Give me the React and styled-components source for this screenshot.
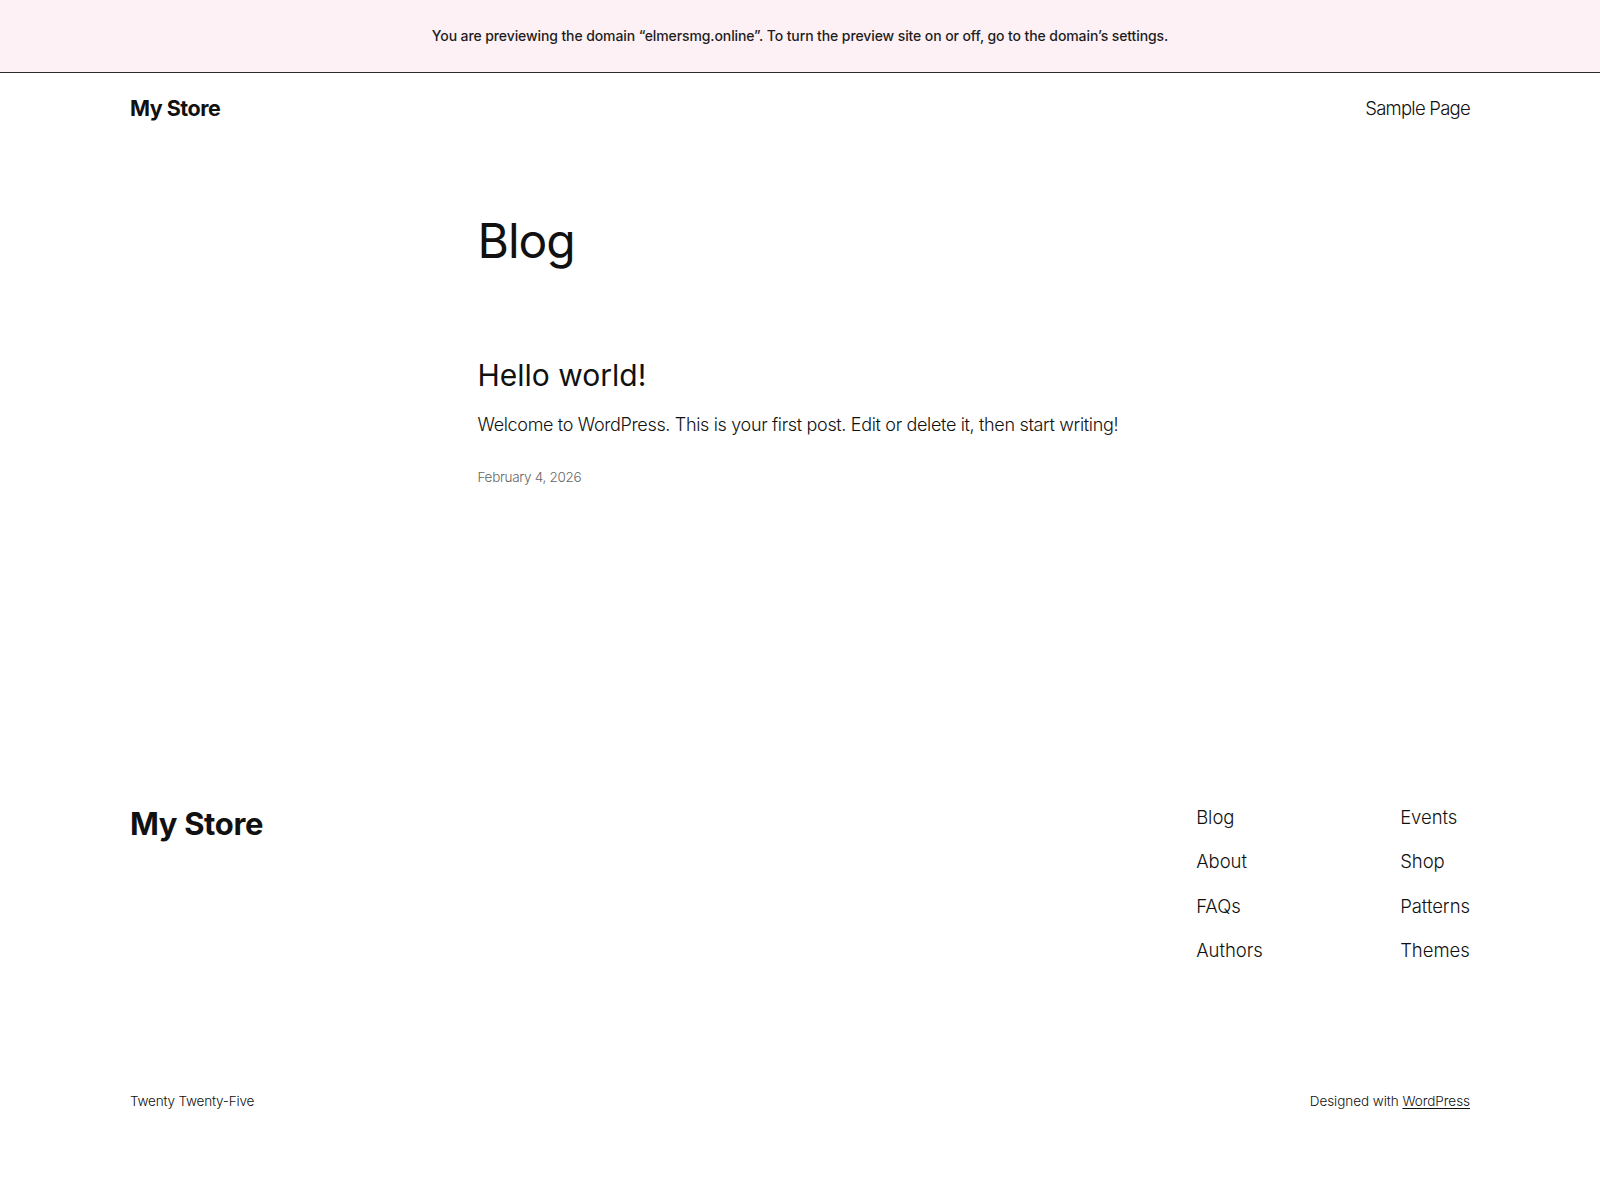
import React from "react";
import styled, { createGlobalStyle } from "styled-components";

const Global = createGlobalStyle`
  * { box-sizing: border-box; }
  body {
    margin: 0;
    background: #ffffff;
    color: #111111;
    font-family: Inter, "Noto Sans", sans-serif;
  }
`;

const Banner = styled.div`
  height: 73px;
  padding-bottom: 2px;
  background: #fdf1f5;
  border-bottom: 1px solid #2a2a2a;
  display: flex;
  align-items: center;
  justify-content: center;
  font-size: 14px;
  font-weight: 500;
  letter-spacing: -0.1px;
  color: #1e1e1e;
`;

const Wide = styled.div`
  width: 1340px;
  margin: 0 auto;
`;

const Header = styled(Wide)`
  display: flex;
  justify-content: space-between;
  align-items: center;
  padding: 19px 0 20px;
`;

const SiteTitle = styled.a`
  font-size: 21.5px;
  font-weight: 700;
  letter-spacing: -0.5px;
  line-height: 32px;
  color: #111111;
  text-decoration: none;
`;

const NavLink = styled.a`
  font-size: 18.5px;
  font-weight: 300;
  line-height: 32px;
  letter-spacing: -0.75px;
  color: #111111;
  text-decoration: none;
`;

const Main = styled.main`
  width: 645px;
  margin: 0 auto;
  padding-top: 68px;
  min-height: 661px;
`;

const PageTitle = styled.h1`
  margin: 0;
  font-size: 48px;
  font-weight: 400;
  line-height: 1.2;
  letter-spacing: -1px;
`;

const PostTitle = styled.h2`
  margin: 87px 0 0;
  font-size: 30px;
  font-weight: 400;
  line-height: 1.2;
  letter-spacing: 0;
`;

const Excerpt = styled.p`
  margin: 18px 0 0;
  font-size: 18px;
  font-weight: 300;
  line-height: 1.6;
  letter-spacing: -0.34px;
`;

const PostDate = styled.div`
  margin-top: 28px;
  font-size: 13.5px;
  font-weight: 300;
  line-height: 1.5;
  color: #666666;
  letter-spacing: -0.3px;
`;

const Footer = styled(Wide)`
  display: flex;
  justify-content: space-between;
  align-items: flex-start;
`;

const FooterTitle = styled.div`
  font-size: 31px;
  font-weight: 700;
  letter-spacing: -0.35px;
  line-height: 36px;
  padding-top: 1px;
`;

const NavGrid = styled.div`
  display: grid;
  grid-template-columns: 204px auto;
  row-gap: 15.7px;
  margin-top: -2px;
`;

const FooterLink = styled.a`
  font-size: 18.5px;
  font-weight: 300;
  line-height: 28.8px;
  letter-spacing: -0.05px;
  color: #111111;
  text-decoration: none;
`;

const Bottom = styled(Wide)`
  display: flex;
  justify-content: space-between;
  margin-top: 126px;
  font-size: 13.5px;
  font-weight: 300;
  line-height: 20px;
  letter-spacing: -0.2px;
`;

const Credit = styled.span`
  letter-spacing: -0.05px;
  a {
    color: #111111;
    text-decoration: underline;
    text-underline-offset: 2px;
  }
`;

export default function App() {
  const col1 = ["Blog", "About", "FAQs", "Authors"];
  const col2 = ["Events", "Shop", "Patterns", "Themes"];
  const cells = [];
  col1.forEach((c, i) => {
    cells.push(<FooterLink key={c} href="#">{c}</FooterLink>);
    cells.push(<FooterLink key={col2[i]} href="#">{col2[i]}</FooterLink>);
  });
  return (
    <>
      <Global />
      <Banner>
        You are previewing the domain “elmersmg.online”. To turn the preview site on or off, go to the domain’s settings.
      </Banner>
      <Header>
        <SiteTitle href="#">My Store</SiteTitle>
        <NavLink href="#">Sample Page</NavLink>
      </Header>
      <Main>
        <PageTitle>Blog</PageTitle>
        <PostTitle>Hello world!</PostTitle>
        <Excerpt>Welcome to WordPress. This is your first post. Edit or delete it, then start writing!</Excerpt>
        <PostDate>February 4, 2026</PostDate>
      </Main>
      <Footer>
        <FooterTitle>My Store</FooterTitle>
        <NavGrid>{cells}</NavGrid>
      </Footer>
      <Bottom>
        <span>Twenty Twenty-Five</span>
        <Credit>
          Designed with <a href="#">WordPress</a>
        </Credit>
      </Bottom>
    </>
  );
}
